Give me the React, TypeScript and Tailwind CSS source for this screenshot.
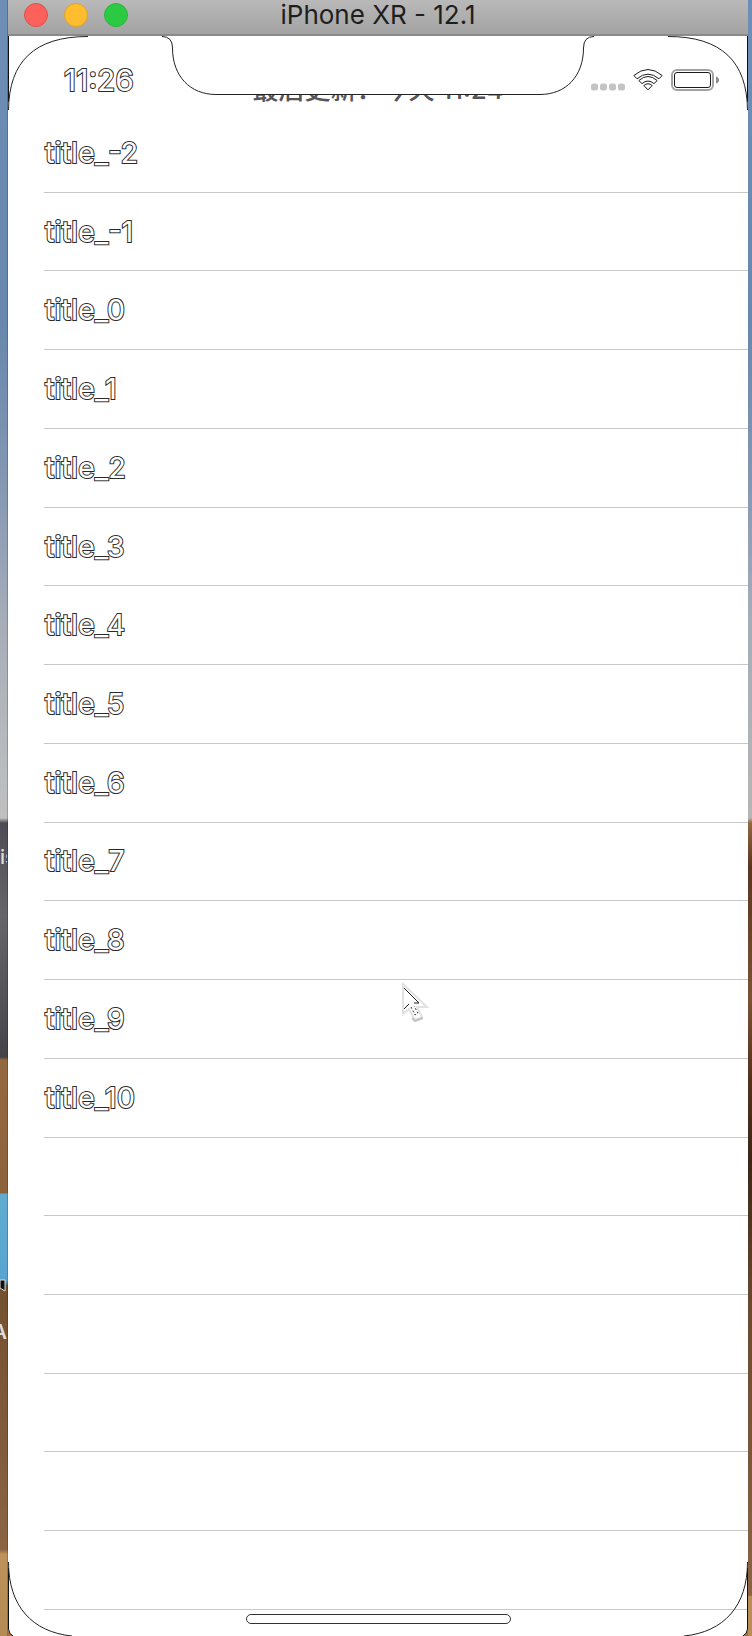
import React from "react";

const titles = ["-2", "-1", "0", "1", "2", "3", "4", "5", "6", "7", "8", "9", "10"];
const emptyRows = [0, 1, 2, 3, 4, 5];

const outlined = "text-white [-webkit-text-stroke:2px_#2a2a2a] [paint-order:stroke_fill]";

function TitleBar() {
  return (
    <header className="relative flex h-9 shrink-0 items-center border-b-2 border-[#8a8a8a] bg-linear-to-b from-[#b9b9b9] to-[#a3a3a3] pb-1 pl-4">
      <div className="flex gap-4">
        <button aria-label="Close" className="size-6 rounded-full border border-[#dd5148] bg-[#fc615c]" />
        <button aria-label="Minimize" className="size-6 rounded-full border border-[#dfa22c] bg-[#fdbd2f]" />
        <button aria-label="Zoom" className="size-6 rounded-full border border-[#2bb53c] bg-[#2acb42]" />
      </div>
      <h1 className="pointer-events-none absolute inset-x-0 top-0 text-center text-[26px] leading-[30px] text-[#1e1e1e]">
        iPhone XR - 12.1
      </h1>
    </header>
  );
}

function TopCorner({ className }: { className: string }) {
  return (
    <svg className={className} width="90" height="84" viewBox="0 0 90 84" fill="none" aria-hidden="true">
      <path d="M0.5 0V66" stroke="#111" />
      <path d="M0.5 74C1 26 26 0.5 80 0.5" stroke="#222" />
    </svg>
  );
}

function BottomCorner({ className }: { className: string }) {
  return (
    <svg className={className} width="80" height="80" viewBox="0 0 80 80" fill="none" aria-hidden="true">
      <path d="M0 72L0 80H5Q1 78 0 72Z" fill="#a5723f" />
      <path d="M0.5 12V73Q1 78 5 80" stroke="#111" />
      <path d="M0.5 6C0.5 50 24 76 64 80" stroke="#222" />
    </svg>
  );
}

function StatusBar() {
  return (
    <div className="relative flex h-[78px] shrink-0 items-start justify-between pl-14 pr-[29px]">
      <TopCorner className="absolute left-0 top-0" />
      <TopCorner className="absolute right-0 top-0 -scale-x-100" />
      <svg className="absolute left-1/2 top-0 -translate-x-1/2" width="432" height="60" viewBox="0 0 432 60" fill="none" aria-hidden="true">
        <path d="M0 0.5Q10.500 0.500 10.500 12C10.500 40 28 58.500 54 58.500H378C404 58.500 421.500 40 421.500 12Q421.500 0.500 432 0.500" stroke="#222" />
      </svg>
      <div className="absolute inset-x-0 top-[59px] flex h-[10px] items-end justify-center overflow-hidden">
        <p className="whitespace-pre text-[26px] font-medium leading-[30px] text-[#55555a]">最后更新：今天 11:24</p>
      </div>
      <time className={`mt-7 text-[30px] leading-8 ${outlined}`}>11:26</time>
      <div className="mt-[33px] flex items-start gap-2">
        <svg className="mt-[14px]" width="34" height="8" viewBox="0 0 34 8" fill="#c4c4c6" aria-hidden="true">
          <rect x="0" y="0.500" width="7" height="7" rx="2.500" />
          <rect x="9" y="0.500" width="7" height="7" rx="2.500" />
          <rect x="18" y="0.500" width="7" height="7" rx="2.500" />
          <rect x="27" y="0.500" width="7" height="7" rx="2.500" />
        </svg>
        <svg width="30" height="22" viewBox="0 0 30 22" fill="none" stroke="#1c1c1c" strokeLinejoin="round" aria-hidden="true">
          <path d="M0.800 6.500Q15 -5.500 29.200 6.500L26 9.800Q15 0.500 4 9.800Z" />
          <path d="M5.800 11.500Q15 3.500 24.200 11.500L21 14.600Q15 9.500 9 14.600Z" />
          <path d="M10.800 16.500Q15 13 19.200 16.500L15 20.800Z" />
        </svg>
        <svg width="48" height="22" viewBox="0 0 48 22" fill="none" aria-hidden="true">
          <rect x="1" y="1" width="41" height="20" rx="5" stroke="#a3a3a5" strokeWidth="2" />
          <rect x="3.500" y="3.500" width="36" height="15" rx="2.500" stroke="#1c1c1c" />
          <path d="M45 7.500Q48 8.500 48 11T45 14.500Z" fill="#8d8d90" />
        </svg>
      </div>
    </div>
  );
}

function Cursor() {
  return (
    <svg className="absolute left-[53%] top-[60%]" width="32" height="44" viewBox="0 0 32 44" fill="none" aria-hidden="true">
      <path d="M3 2V32L9 27L15 38L22 35L17 25H27Z" fill="#fff" stroke="#e2e2e2" strokeWidth="2" />
      <path d="M12 36L15 39L23 36" stroke="#c4c4c4" strokeWidth="2" />
      <path d="M4 6L19 21H14M4 27L9 22" stroke="#1c1c1c" />
      <path d="M11 25L15 33L18 31L14 24" stroke="#333" strokeDasharray="2 2" />
    </svg>
  );
}

function LeftDesktop() {
  return (
    <div className="relative w-2 shrink-0 overflow-hidden border-r border-black/20 bg-[linear-gradient(180deg,#6d8fb5_0,#6888ad_20%,#8296b3_29%,#a6adb8_38%,#c0c0c0_50%,#4d4c52_50.300%,#66666a_56%,#45444a_64.600%,#94693f_64.800%,#8d633c_72.900%,#60abd0_73%,#5aa5d0_78.300%,#73502f_78.600%,#8a6443_94.700%,#bd935a_95%,#b48a55_100%)]">
      <span className="absolute left-0 top-[51.800%] text-xl font-medium leading-none text-[#ddd]">is</span>
      <svg className="absolute left-0 top-[78.200%]" width="6" height="13" viewBox="0 0 6 13" aria-hidden="true">
        <path d="M0 1H5V12L0 9Z" fill="#111" stroke="#ddd" />
      </svg>
      <span className="absolute right-0 top-[80.800%] text-xl font-semibold leading-none text-[#ddd]">A</span>
    </div>
  );
}

export default function App() {
  return (
    <div className="flex min-h-screen w-full bg-white font-['Inter','Noto_Sans_CJK_SC',sans-serif]">
      <LeftDesktop />
      <main className="relative flex min-w-0 flex-1 flex-col overflow-hidden bg-white">
        <TitleBar />
        <StatusBar />
        <ul className="flex flex-1 flex-col pl-9">
          {titles.map((n) => (
            <li key={n} className={`flex min-h-12 flex-1 items-center border-b border-[#c8c8c8] pl-px text-[29px] leading-9 ${outlined}`}>
              title_{n}
            </li>
          ))}
          {emptyRows.map((n) => (
            <li key={n} className="min-h-12 flex-1 border-b border-[#c8c8c8]" />
          ))}
        </ul>
        <div className="flex h-[26px] shrink-0 justify-center pt-1">
          <div className="h-[10px] w-[265px] rounded-full border border-[#333]" />
        </div>
        <BottomCorner className="absolute bottom-0 left-0" />
        <BottomCorner className="absolute bottom-0 right-0 -scale-x-100" />
        <Cursor />
      </main>
      <div className="w-1 shrink-0 bg-[linear-gradient(180deg,#6d8fb5_0,#6888ad_20%,#8296b3_29%,#a6adb8_38%,#b5b5b5_50%,#93683f_50.300%,#5a3520_53%,#7a5233_61%,#54301c_66%,#3a2618_71%,#6b4930_80%,#8a6443_97.500%,#b98e56_97.600%,#b98e56_100%)]" />
    </div>
  );
}
